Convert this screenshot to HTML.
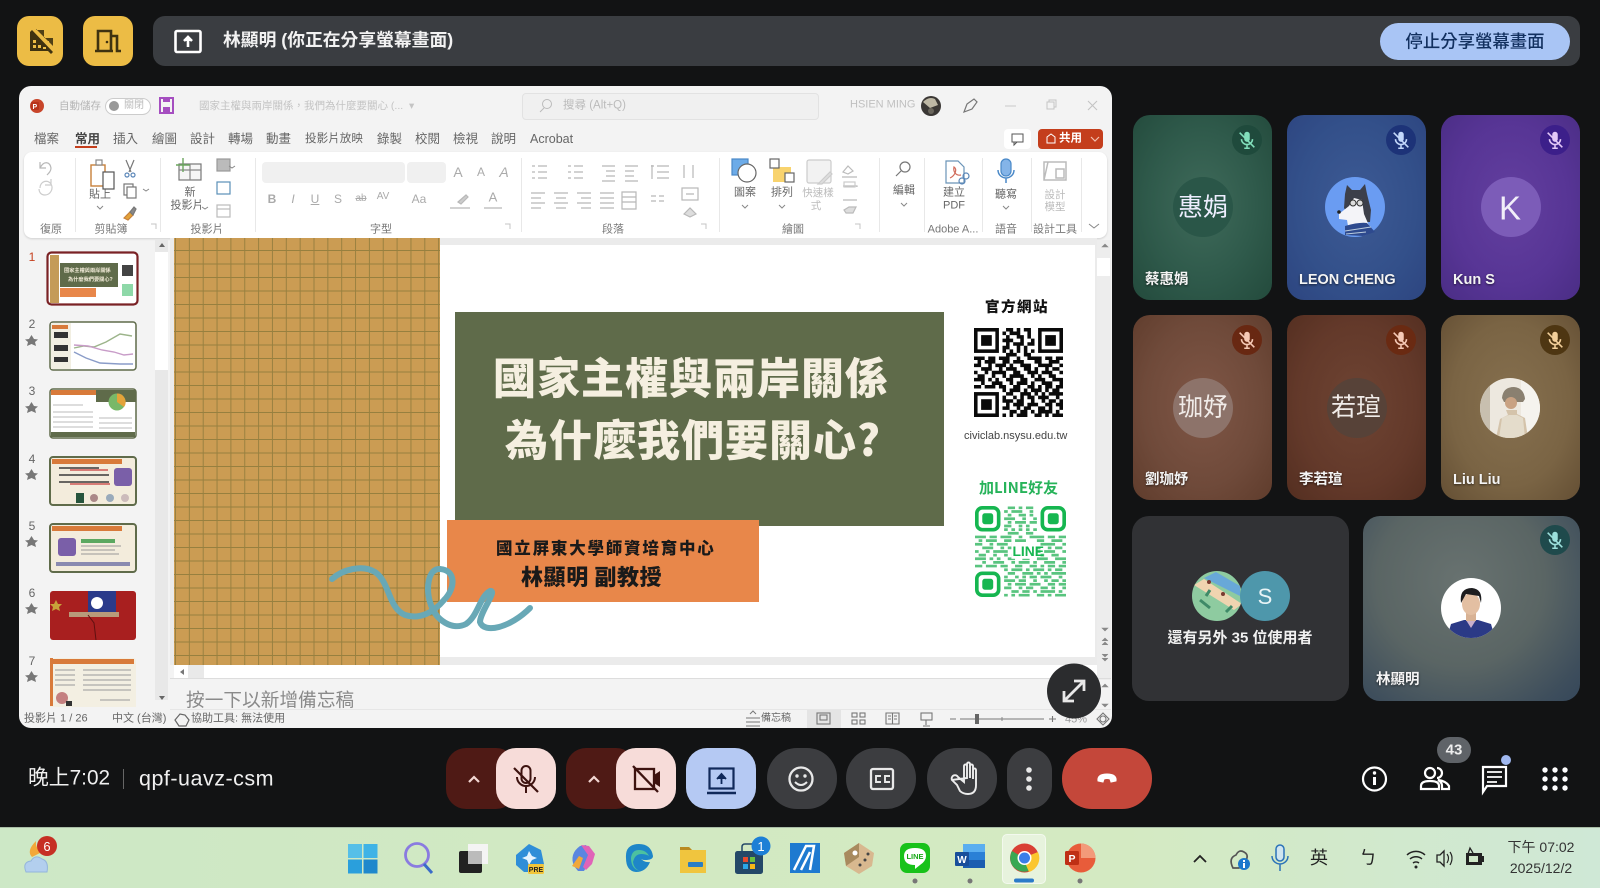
<!DOCTYPE html>
<html><head><meta charset="utf-8"><title>Meet</title>
<style>
html,body{margin:0;padding:0;background:#121314}
#r{position:relative;width:1600px;height:888px;overflow:hidden;background:#121314;font-family:"Liberation Sans","Noto Sans CJK TC",sans-serif;color:#fff;filter:blur(.3px)}
.b{position:absolute}
.t{position:absolute;white-space:nowrap;transform:translateY(-50%);line-height:1}
.c{position:absolute;white-space:nowrap;transform:translate(-50%,-50%);line-height:1}
svg{position:absolute;left:0;top:0;overflow:visible}
.tile{position:absolute;width:139px;height:185px;border-radius:17px}
.nm{font-size:14.5px;font-weight:700;color:#f4f4f4;text-shadow:0 1px 2px rgba(0,0,0,.6)}
.tab{font-size:12.5px;color:#666}
.rb{font-size:11px;color:#666}
.gl{font-size:11px;color:#777}
.dis{color:#bbb}
.st{font-size:11px;color:#666}
</style></head>
<body><div id="r">

<!-- top bar -->
<div class="b" style="left:17px;top:16px;width:46px;height:50px;background:#ecbc45;border-radius:12px"></div>
<div class="b" style="left:83px;top:16px;width:50px;height:50px;background:#ecbc45;border-radius:12px"></div>
<div class="b" style="left:153px;top:16px;width:1427px;height:50px;background:#3a3d41;border-radius:12px"></div>
<div class="t" style="left:223px;top:41px;font-size:17.8px;font-weight:700;color:#f2f2f2">林顯明 (你正在分享螢幕畫面)</div>
<div class="b" style="left:1380px;top:23px;width:190px;height:37px;background:#a9c5f5;border-radius:19px"></div>
<div class="c" style="left:1475px;top:42px;font-size:17.4px;color:#12305f;font-weight:500">停止分享螢幕畫面</div>

<!-- PPT window -->
<div class="b" style="left:19px;top:86px;width:1093px;height:642px;background:#f3f3f3;border-radius:12px;overflow:hidden"></div>
<div class="t" style="left:59px;top:106px;font-size:10.5px;color:#b5b5b5">自動儲存</div>
<div class="b" style="left:105px;top:98px;width:44px;height:15px;border:1px solid #ccc;border-radius:9px;background:#fff"></div>
<div class="b" style="left:109px;top:101px;width:10px;height:10px;border-radius:5px;background:#999"></div>
<div class="t" style="left:124px;top:106px;font-size:10px;color:#bbb">關閉</div>
<div class="t" style="left:199px;top:106px;font-size:10.5px;color:#c4c4c4">國家主權與兩岸關係，我們為什麼要關心 (...&nbsp;&nbsp;▾</div>
<div class="b" style="left:522px;top:93px;width:295px;height:25px;background:#f0f0f0;border:1px solid #e2e2e2;border-radius:4px"></div>
<div class="t" style="left:563px;top:106px;font-size:11.5px;color:#bbb">搜尋 (Alt+Q)</div>
<div class="t" style="left:850px;top:105px;font-size:11px;color:#c0c0c0">HSIEN MING</div>

<div class="t tab" style="left:34px;top:139px">檔案</div>
<div class="t tab" style="left:75px;top:139px;color:#444;font-weight:700">常用</div>
<div class="b" style="left:75px;top:146px;width:22px;height:2px;background:#c43e1c"></div>
<div class="t tab" style="left:113px;top:139px">插入</div>
<div class="t tab" style="left:152px;top:139px">繪圖</div>
<div class="t tab" style="left:190px;top:139px">設計</div>
<div class="t tab" style="left:228px;top:139px">轉場</div>
<div class="t tab" style="left:266px;top:139px">動畫</div>
<div class="t tab" style="left:305px;top:139px;font-size:11.6px">投影片放映</div>
<div class="t tab" style="left:377px;top:139px">錄製</div>
<div class="t tab" style="left:415px;top:139px">校閱</div>
<div class="t tab" style="left:453px;top:139px">檢視</div>
<div class="t tab" style="left:491px;top:139px">說明</div>
<div class="t tab" style="left:530px;top:139px">Acrobat</div>
<div class="b" style="left:1004px;top:129px;width:27px;height:20px;background:#fff;border-radius:4px"></div>
<div class="b" style="left:1038px;top:129px;width:65px;height:20px;background:#c43e1c;border-radius:4px"></div>
<div class="t" style="left:1059px;top:139px;font-size:11.5px;font-weight:700;color:#fff">共用</div>

<!-- ribbon -->
<div class="b" style="left:24px;top:152px;width:1083px;height:86px;background:#fff;border-radius:8px;box-shadow:0 1px 2px rgba(0,0,0,.15)"></div>
<div class="c gl" style="left:51px;top:229.500px">復原</div>
<div class="c gl" style="left:111px;top:229.500px">剪貼簿</div>
<div class="c gl" style="left:207px;top:229.500px">投影片</div>
<div class="c gl" style="left:381px;top:229.500px">字型</div>
<div class="c gl" style="left:613px;top:229.500px">段落</div>
<div class="c gl" style="left:793px;top:229.500px">繪圖</div>
<div class="c gl" style="left:953px;top:229.500px">Adobe A...</div>
<div class="c gl" style="left:1006px;top:229.500px">語音</div>
<div class="c gl" style="left:1055px;top:229.500px">設計工具</div>
<div class="c rb" style="left:100px;top:195px">貼上</div>
<div class="c rb" style="left:190px;top:193px">新</div>
<div class="c rb" style="left:187px;top:206px">投影片</div>
<div class="c rb" style="left:745px;top:193px">圖案</div>
<div class="c rb" style="left:782px;top:193px">排列</div>
<div class="c rb dis" style="left:818px;top:193px;font-size:10.5px">快速樣</div>
<div class="c rb dis" style="left:816px;top:206px;font-size:10.5px">式</div>
<div class="c rb" style="left:904px;top:191px">編輯</div>
<div class="c rb" style="left:954px;top:193px">建立</div>
<div class="c rb" style="left:954px;top:206px">PDF</div>
<div class="c rb" style="left:1006px;top:195px">聽寫</div>
<div class="c rb dis" style="left:1055px;top:195px;font-size:10.5px">設計</div>
<div class="c rb dis" style="left:1055px;top:207px;font-size:10.5px">模型</div>
<div class="b" style="left:262px;top:162px;width:143px;height:21px;background:#f0f0f0;border-radius:4px"></div>
<div class="b" style="left:407px;top:162px;width:39px;height:21px;background:#f0f0f0;border-radius:4px"></div>
<div class="c" style="left:458px;top:172px;font-size:14px;color:#aaa">A</div>
<div class="c" style="left:481px;top:172px;font-size:12px;color:#aaa">A</div>
<div class="c" style="left:504px;top:172px;font-size:14px;color:#aaa;font-style:italic">A</div>
<div class="c" style="left:272px;top:199px;font-size:12px;color:#aaa;font-weight:700">B</div>
<div class="c" style="left:293px;top:199px;font-size:12px;color:#aaa;font-style:italic">I</div>
<div class="c" style="left:315px;top:199px;font-size:12px;color:#aaa;text-decoration:underline">U</div>
<div class="c" style="left:338px;top:199px;font-size:12px;color:#aaa">S</div>
<div class="c" style="left:361px;top:199px;font-size:10px;color:#aaa;text-decoration:line-through">ab</div>
<div class="c" style="left:383px;top:197px;font-size:10px;color:#aaa">AV</div>
<div class="c" style="left:419px;top:199px;font-size:12px;color:#aaa">Aa</div>
<div class="c" style="left:493px;top:197px;font-size:13px;color:#aaa">A</div>

<!-- panels -->
<div class="b" style="left:155px;top:240px;width:13px;height:460px;background:#e8e8e8"></div>
<div class="b" style="left:155px;top:252px;width:13px;height:118px;background:#fff"></div>
<div class="b" style="left:170px;top:238px;width:927px;height:427px;background:#ebebeb"></div>
<div class="b" style="left:440px;top:245px;width:655px;height:412px;background:#fff"></div>
<div class="b" style="left:1097px;top:240px;width:14px;height:440px;background:#ededed"></div>
<div class="b" style="left:1097px;top:258px;width:13px;height:18px;background:#fff"></div>
<div class="b" style="left:174px;top:665px;width:923px;height:13px;background:#fff"></div>
<div class="b" style="left:188px;top:665px;width:16px;height:13px;background:#e9e9e9"></div>
<div class="b" style="left:170px;top:678px;width:941px;height:1px;background:#ddd"></div>
<div class="b" style="left:170px;top:709px;width:941px;height:1px;background:#e6e6e6"></div>
<div class="t" style="left:186px;top:701px;font-size:18.6px;color:#8a8a8a;letter-spacing:.1px;height:19px">按一下以新增備忘稿</div>
<div class="t st" style="left:24px;top:719px">投影片 1 / 26</div>
<div class="t st" style="left:112px;top:719px">中文 (台灣)</div>
<div class="t st" style="left:191px;top:719px">協助工具: 無法使用</div>
<div class="t st" style="left:761px;top:719px;font-size:10px">備忘稿</div>
<div class="b" style="left:807px;top:710px;width:34px;height:18px;background:#e4e4e4"></div>
<div class="c st" style="left:1076px;top:720px;color:#999">45%</div>
<div class="c" style="left:32px;top:257px;font-size:12px;color:#c43e1c">1</div>
<div class="c" style="left:32px;top:324px;font-size:12px;color:#666">2</div>
<div class="c" style="left:32px;top:391px;font-size:12px;color:#666">3</div>
<div class="c" style="left:32px;top:459px;font-size:12px;color:#666">4</div>
<div class="c" style="left:32px;top:526px;font-size:12px;color:#666">5</div>
<div class="c" style="left:32px;top:593px;font-size:12px;color:#666">6</div>
<div class="c" style="left:32px;top:661px;font-size:12px;color:#666">7</div>

<!-- tiles -->
<div class="tile" style="left:1133px;top:115px;background:radial-gradient(ellipse at 50% 48%,#3f6a5a 0,#2f5a4b 55%,#234a3c 100%)"></div>
<div class="tile" style="left:1287px;top:115px;background:radial-gradient(ellipse at 50% 48%,#3d5a94 0,#33508a 60%,#2d4580 100%)"></div>
<div class="tile" style="left:1441px;top:115px;background:radial-gradient(ellipse at 50% 48%,#633f9f 0,#573595 60%,#4a2d85 100%)"></div>
<div class="tile" style="left:1133px;top:315px;background:radial-gradient(ellipse at 50% 48%,#7f5646 0,#6f4a3a 60%,#5f3c2c 100%)"></div>
<div class="tile" style="left:1287px;top:315px;background:radial-gradient(ellipse at 50% 48%,#6e4433 0,#63392a 60%,#532e20 100%)"></div>
<div class="tile" style="left:1441px;top:315px;background:radial-gradient(ellipse at 50% 48%,#86704f 0,#7a6444 60%,#644f34 100%)"></div>
<div class="b" style="left:1132px;top:516px;width:217px;height:185px;border-radius:17px;background:#313235"></div>
<div class="b" style="left:1363px;top:516px;width:217px;height:185px;border-radius:17px;background:radial-gradient(ellipse at 45% 35%,#687270 0,#5a6564 50%,#3e4e5c 85%,#35475a 100%)"></div>

<div class="b" style="left:1173px;top:177px;width:60px;height:60px;border-radius:30px;background:#2a5648"></div>
<div class="b" style="left:1481px;top:177px;width:60px;height:60px;border-radius:30px;background:#7c5cb8"></div>
<div class="b" style="left:1173px;top:378px;width:60px;height:60px;border-radius:30px;background:#8d736a"></div>
<div class="b" style="left:1327px;top:378px;width:60px;height:60px;border-radius:30px;background:#574238"></div>
<div class="c" style="left:1203px;top:208px;font-size:25px;color:#eef">惠娟</div>
<div class="c" style="left:1510px;top:208px;font-size:33px;color:#f1eef9">K</div>
<div class="c" style="left:1203px;top:408px;font-size:25px;color:#f1ece9">珈妤</div>
<div class="c" style="left:1356px;top:408px;font-size:25px;color:#f1ece9">若瑄</div>
<div class="t nm" style="left:1145px;top:280px">蔡惠娟</div>
<div class="t nm" style="left:1299px;top:280px">LEON CHENG</div>
<div class="t nm" style="left:1453px;top:280px">Kun S</div>
<div class="t nm" style="left:1145px;top:480px">劉珈妤</div>
<div class="t nm" style="left:1299px;top:480px">李若瑄</div>
<div class="t nm" style="left:1453px;top:480px">Liu Liu</div>
<div class="t nm" style="left:1376px;top:680px">林顯明</div>
<div class="c" style="left:1240px;top:638px;font-size:15px;font-weight:700;color:#f0f0f0">還有另外 35 位使用者</div>

<!-- bottom bar -->
<div class="t" style="left:28px;top:779px;font-size:20.800px;color:#f0f0f0">晚上7:02</div>
<div class="b" style="left:123px;top:769px;width:1px;height:20px;background:#666"></div>
<div class="t" style="left:139px;top:779px;font-size:21.500px;letter-spacing:.5px;color:#f0f0f0">qpf-uavz-csm</div>
<div class="b" style="left:446px;top:748px;width:70px;height:61px;border-radius:20px;background:#4f1a15"></div>
<div class="b" style="left:496px;top:748px;width:60px;height:61px;border-radius:20px;background:#f7dcd9"></div>
<div class="b" style="left:566px;top:748px;width:70px;height:61px;border-radius:20px;background:#4f1a15"></div>
<div class="b" style="left:616px;top:748px;width:60px;height:61px;border-radius:20px;background:#f7dcd9"></div>
<div class="b" style="left:686px;top:748px;width:70px;height:61px;border-radius:21px;background:#b5c9f3"></div>
<div class="b" style="left:767px;top:748px;width:70px;height:61px;border-radius:30px;background:#3c3d40"></div>
<div class="b" style="left:846px;top:748px;width:70px;height:61px;border-radius:30px;background:#3c3d40"></div>
<div class="b" style="left:927px;top:748px;width:70px;height:61px;border-radius:30px;background:#3c3d40"></div>
<div class="b" style="left:1007px;top:748px;width:45px;height:61px;border-radius:23px;background:#3c3d40"></div>
<div class="b" style="left:1062px;top:748px;width:90px;height:61px;border-radius:30px;background:#c4473a"></div>
<div class="b" style="left:1437px;top:737px;width:34px;height:26px;border-radius:13px;background:#5f6368"></div>
<div class="c" style="left:1454px;top:750px;font-size:15px;font-weight:700;color:#eee">43</div>

<!-- taskbar -->
<div class="b" style="left:0;top:827px;width:1600px;height:61px;background:linear-gradient(90deg,#cde8c6 0,#d2e9c2 40%,#d4eac2 70%,#cfe8d6 100%);border-top:1px solid #a9bda6;box-sizing:border-box"></div>
<div class="b" style="left:1002px;top:834px;width:44px;height:50px;background:rgba(255,255,255,.45);border-radius:5px;border:1px solid rgba(255,255,255,.5);box-sizing:border-box"></div>
<div class="c" style="left:1319px;top:858px;font-size:18px;color:#222">英</div>
<div class="c" style="left:1368px;top:858px;font-size:18px;color:#222">ㄅ</div>
<div class="c" style="left:1541px;top:847px;font-size:14px;color:#333">下午 07:02</div>
<div class="c" style="left:1541px;top:868px;font-size:14px;color:#333">2025/12/2</div>

<svg width="1600" height="888" viewBox="0 0 1600 888">
<defs>
<symbol id="mo" viewBox="0 0 24 24"><rect x="9" y="3" width="6" height="11" rx="3" fill="currentColor"/><path d="M6 11a6 6 0 0 0 12 0M12 17v4M9 21h6M4 4l16 16" fill="none" stroke="currentColor" stroke-width="1.7"/></symbol>
<path id="qrd" fill="none" d="M9 .5h2M12 .5h1M14 .5h2M8 1.5h1M10 1.5h3M15 1.5h1M9 2.5h1M12 2.5h2M15 2.5h1M8 3.5h3M13 3.5h1M16 3.5h1M9 4.5h1M11 4.5h3M15 4.5h2M8 5.5h2M12 5.5h1M14 5.5h1M8 6.5h1M10 6.5h1M12 6.5h1M14 6.5h1M16 6.5h1M9 7.5h3M14 7.5h2M0 8.5h3M4 8.5h2M7 8.5h3M12 8.5h1M15 8.5h4M20 8.5h2M23 8.5h2M1 9.5h1M3 9.5h3M8 9.5h2M11 9.5h3M17 9.5h2M21 9.5h3M0 10.5h2M4 10.5h1M6 10.5h3M10 10.5h1M13 10.5h3M18 10.5h4M24 10.5h1M2 11.5h3M7 11.5h1M9 11.5h3M14 11.5h2M17 11.5h1M20 11.5h1M22 11.5h2M0 12.5h1M3 12.5h1M5 12.5h4M11 12.5h2M15 12.5h3M19 12.5h3M24 12.5h1M1 13.5h2M5 13.5h1M8 13.5h1M10 13.5h4M16 13.5h1M18 13.5h1M21 13.5h2M0 14.5h3M4 14.5h1M6 14.5h1M9 14.5h2M13 14.5h2M17 14.5h3M22 14.5h3M2 15.5h1M5 15.5h3M10 15.5h1M12 15.5h3M16 15.5h1M19 15.5h3M24 15.5h1M0 16.5h2M3 16.5h3M7 16.5h2M11 16.5h2M15 16.5h2M18 16.5h1M20 16.5h2M23 16.5h2M8 17.5h1M10 17.5h3M14 17.5h1M16 17.5h3M20 17.5h1M22 17.5h2M9 18.5h2M13 18.5h3M17 18.5h1M19 18.5h1M21 18.5h4M8 19.5h1M11 19.5h1M13 19.5h1M15 19.5h2M18 19.5h3M23 19.5h1M8 20.5h3M12 20.5h2M16 20.5h1M19 20.5h1M21 20.5h2M24 20.5h1M9 21.5h1M11 21.5h3M15 21.5h3M20 21.5h2M23 21.5h2M8 22.5h2M12 22.5h1M14 22.5h2M18 22.5h2M21 22.5h1M24 22.5h1M10 23.5h2M13 23.5h2M16 23.5h1M18 23.5h4M23 23.5h1M8 24.5h1M10 24.5h1M12 24.5h3M17 24.5h2M20 24.5h1M22 24.5h3"/>
<pattern id="grid" width="13.85" height="13.5" patternUnits="userSpaceOnUse" x="175" y="250"><path d="M.5 0V13.5M0 .5H13.85" stroke="#97803f" stroke-width=".95" fill="none"/></pattern>
</defs>

<!-- top icons -->
<g fill="#3f3210" stroke="none">
<path d="M30 32l2-2 21 22-2 2-3-3H30z"/><path d="M36 30h8v8h9v8l-4-4v-1h-1l-12-12z" opacity=".9"/>
</g>
<g fill="#ecbc45"><rect x="33" y="40" width="3" height="3"/><rect x="33" y="45" width="3" height="3"/><rect x="38" y="45" width="3" height="3"/><rect x="43" y="47" width="3" height="2"/></g>
<path d="M98 51V31h13v20M111 36h6v15h4M95 51h18" fill="none" stroke="#3f3210" stroke-width="2.600"/><circle cx="107" cy="42" r="1.300" fill="#3f3210"/>
<rect x="175.500" y="31" width="25" height="21" rx="1.500" fill="none" stroke="#fff" stroke-width="2.600"/>
<path d="M188 47v-8M184 41l4-4 4 4" stroke="#fff" stroke-width="2.600" fill="#fff"/>

<!-- title bar icons -->
<circle cx="37" cy="106" r="7" fill="#c8452a"/><rect x="31" y="102" width="8" height="8" rx="1" fill="#b8341c"/><text x="32.500" y="109" font-size="7" fill="#fff" font-family="Liberation Sans" font-weight="700">P</text>
<path d="M160 98h13v15h-13z" fill="none" stroke="#a54ec0" stroke-width="2"/><rect x="163" y="98" width="7" height="4" fill="#a54ec0"/><rect x="163" y="107" width="7" height="6" fill="#a54ec0"/>
<circle cx="547" cy="104" r="4.500" fill="none" stroke="#bbb"/><path d="M544 108l-4 4" stroke="#bbb"/>
<circle cx="931" cy="106" r="10" fill="#3a3734"/><path d="M923 102q6-6 12-3l3 6-8 3z" fill="#bdb7a4"/><circle cx="931" cy="111" r="3" fill="#6a665c"/>
<path d="M964 112l3-8 7-5 3 3-5 7z" fill="none" stroke="#777" stroke-width="1.200"/>
<path d="M1005 106h11" stroke="#c8c8c8"/><rect x="1047" y="102" width="7" height="7" fill="none" stroke="#c4c4c4"/><path d="M1049 102v-2h7v7h-2" fill="none" stroke="#c4c4c4"/><path d="M1088 101l9 9M1097 101l-9 9" stroke="#c4c4c4" stroke-width="1.100"/>
<rect x="1012" y="134" width="11" height="8" fill="none" stroke="#555"/><path d="M1014 142v3l3-3" fill="none" stroke="#555"/>
<path d="M1047 137l4-3 4 3v6h-8z" fill="none" stroke="#fff"/><path d="M1091 137l4 4 4-4" fill="none" stroke="#f2c0b0" stroke-width="1.200"/>

<!-- ribbon dividers -->
<g stroke="#e8e8e8"><path d="M75.500 158V232M160.500 158V232M255.500 158V232M521.500 158V232M719.500 158V232M879.500 158V232M924.500 158V232M982.500 158V232M1031.500 158V232M1081.500 158V232"/></g>
<!-- ribbon icons -->
<g fill="none" stroke="#b8b8b8" stroke-width="1.200">
<path d="M40 168c4-8 10-6 11 0 0 3-2 5-4 7M40 162v6h6"/><path d="M40 188c0-7 8-9 11-4s-1 11-6 11-6-4-6-6M51 179v6h-6" stroke="#ccc"/>
<path d="M458 202l8-7 2 2-7 7z" fill="#ccc"/><path d="M450 208h20M484 208h18"/>
<path d="M532 166h3M538 166h9M532 172h3M538 172h9M532 178h3M538 178h9M568 166h3M574 166h9M568 172h3M574 172h9M568 178h3M574 178h9M602 166h13M606 171h9M606 176h9M602 181h13M625 166h13M625 171h9M625 176h9M625 181h13M651 166h3M657 166h12M657 172h12M657 178h12M652 165v14M684 165v13M693 165v13"/>
<path d="M531 193h14M531 198h10M531 203h14M531 208h10M554 193h14M556 198h10M554 203h14M556 208h10M577 193h14M581 198h10M577 203h14M581 208h10M600 193h14M600 198h14M600 203h14M600 208h14M622 192h14v17h-14zM622 197h14M622 202h14M651 196h5M651 201h5M659 196h5M659 201h5"/>
<rect x="682" y="188" width="16" height="12"/><path d="M686 194h8M684 214l6-6 6 6-6 3z" fill="#ddd"/>
</g>
<g fill="none" stroke="#777" stroke-width="1.200">
<rect x="91" y="165" width="14" height="21" stroke="#c8813a" stroke-width="1.400"/><rect x="103" y="172" width="11" height="17" fill="#fff" stroke="#555"/><rect x="96" y="160" width="6" height="5" fill="#fff" stroke="#888"/>
<path d="M126 160l5 12M134 160l-5 12"/><circle cx="127" cy="175" r="2" stroke="#5a86b8"/><circle cx="133" cy="175" r="2" stroke="#5a86b8"/>
<rect x="124" y="184" width="9" height="11"/><rect x="127" y="187" width="9" height="11" fill="#fff"/>
<path d="M124 218l6-6 3 3-5 5z" fill="#e3a33a" stroke="#c8813a"/><path d="M130 212l4-5 2 2-3 6z" fill="#888"/>
<rect x="179" y="164" width="22" height="16" fill="#f6f6f6"/><path d="M190 164v16M179 170h22" stroke="#888"/><path d="M183 158v14M176 165h14" stroke="#6ca65f" stroke-width="1.400"/>
<rect x="217" y="159" width="13" height="12" fill="#bbb" stroke="#999"/><rect x="217" y="182" width="13" height="12" stroke="#5a90b8"/><rect x="217" y="205" width="13" height="12" stroke="#bbb"/><path d="M217 209h13" stroke="#bbb"/>
<rect x="732" y="159" width="16" height="16" fill="#6cabe8" stroke="#4a89c8"/><circle cx="747" cy="173" r="9" fill="#fff" stroke="#666"/>
<rect x="773" y="167" width="18" height="15" fill="#f8d36e" stroke="none"/><rect x="770" y="159" width="9" height="9" fill="#fff" stroke="#666"/><rect x="785" y="173" width="9" height="9" fill="#fff" stroke="#666"/>
<rect x="807" y="160" width="24" height="23" rx="2" fill="#f2f2f2" stroke="#ccc"/><path d="M818 184l12-12 2 2-10 10z" fill="#ddd" stroke="#ccc"/>
<path d="M843 172l5-6 5 5-5 3zM842 177h15M843 186h14v1M843 200h14" stroke="#bbb"/><rect x="844" y="182" width="11" height="5" stroke="#ccc"/><path d="M844 210l5-3h7l-3 6h-7z" stroke="#bbb" fill="#ddd"/>
<circle cx="905" cy="167" r="5"/><path d="M901 171l-5 5"/>
<path d="M946 161h12l6 6v16h-18z" stroke="#6a94b8"/><path d="M950 178c6-3 7-9 4-11-1 5 2 9 7 8" stroke="#d06a5a"/><circle cx="962" cy="181" r="3" stroke="#5a86b8"/><circle cx="966" cy="176" r="3" stroke="#5a86b8"/>
<rect x="1001" y="159" width="10" height="17" rx="5" fill="#84b4e8" stroke="#4a89c8"/><path d="M998 170a8 8 0 0 0 16 0M1006 178v5" stroke="#4a89c8" stroke-width="1.500"/>
<path d="M1044 162h22v18h-22zM1048 162l-4 18M1056 169h8v9h-8z" stroke="#bbb" stroke-width="1.500"/>
</g>
<g fill="none" stroke="#888" stroke-width="1"><path d="M97 206l3 3 3-3M143 189l3 2 3-2M202 207l3 2 3-2M229 166l3 2 3-2M742 205l3 3 3-3M779 205l3 3 3-3M901 203l3 3 3-3M1003 206l3 3 3-3M1089 224l5 4 5-4"/></g>
<g fill="none" stroke="#c4c4c4"><path d="M151 224h5v5M505 224h5v5M701 224h5v5M855 224h5v5"/></g>

<!-- thumbnails -->
<rect x="47.500" y="252.500" width="90" height="52" rx="4" fill="#fff" stroke="#7a2225" stroke-width="2.200"/>
<rect x="50" y="255" width="9" height="48" fill="#c49b58"/>
<rect x="60" y="263" width="58" height="24" fill="#5f6b4a"/>
<rect x="60" y="288" width="36" height="9" fill="#e8874a"/>
<text x="64" y="272" font-size="5.200" fill="#f3ecd9" font-weight="700">國家主權與兩岸關係</text><text x="68" y="281" font-size="5.200" fill="#f3ecd9" font-weight="700">為什麼我們要關心?</text>
<rect x="122" y="265" width="11" height="11" fill="#444"/><rect x="122" y="284" width="11" height="12" fill="#8ed8a8"/>

<g>
<rect x="50" y="322" width="86" height="48" rx="3" fill="#fff" stroke="#5f6b4a" stroke-width="1.500"/>
<rect x="51" y="323" width="20" height="46" fill="#f2efe2"/><rect x="52" y="325" width="16" height="4" fill="#d87a3a"/>
<rect x="54" y="332" width="14" height="6" fill="#333"/><rect x="54" y="345" width="14" height="6" fill="#333"/><rect x="54" y="357" width="14" height="5" fill="#333"/>
<path d="M74 348l10-2 10 1 12-5 14-8 12 2" stroke="#9cb48a" stroke-width="1.400" fill="none"/><path d="M74 345l14 1 14 4 12 2 10 3 9-1" stroke="#c89cc8" stroke-width="1.400" fill="none"/><path d="M74 352l12 6 14 5 20 1 13 0" stroke="#8a9cc8" stroke-width="1.400" fill="none"/>
<rect x="50" y="389" width="86" height="49" rx="3" fill="#fff" stroke="#5f6b4a" stroke-width="1.500"/><rect x="51" y="390" width="45" height="5" fill="#d87a3a"/>
<rect x="96" y="390" width="40" height="12" fill="#5f6b4a"/><circle cx="117" cy="402" r="8.500" fill="#78b868"/><path d="M117 402V393.500A8.500 8.500 0 0 1 124 407z" fill="#e3a33a"/>
<path d="M53 405h30M53 412h40M53 417h40M53 422h40M53 427h40M99 418h33M99 423h33M99 428h33" stroke="#bbb"/><rect x="51" y="432" width="84" height="5" fill="#5f6b4a"/>
<rect x="50" y="457" width="86" height="48" rx="3" fill="#f3ecdc" stroke="#5f6b4a" stroke-width="2"/><rect x="52" y="459" width="70" height="5" fill="#d87a3a"/>
<path d="M59 468h40M59 475h50M59 482h50" stroke="#3a3a3a" stroke-width="1.500"/><path d="M70 470h38M70 484h40" stroke="#c63a3a" stroke-width="1.200"/>
<rect x="114" y="468" width="18" height="18" rx="3" fill="#7a5fa8"/><rect x="76" y="493" width="8" height="10" fill="#26543c"/><circle cx="94" cy="498" r="4" fill="#a88"/><circle cx="110" cy="498" r="4" fill="#9ab"/><circle cx="125" cy="498" r="4" fill="#cbb"/>
<rect x="50" y="524" width="86" height="48" rx="3" fill="#f3ecdc" stroke="#5f6b4a" stroke-width="2"/><rect x="52" y="526" width="70" height="5" fill="#d87a3a"/>
<rect x="58" y="538" width="18" height="18" rx="3" fill="#7a5fa8"/><rect x="81" y="539" width="34" height="4" fill="#5ba860"/><path d="M81 546h40M81 550h34M81 554h38" stroke="#999"/><rect x="56" y="562" width="74" height="4" fill="#8a8ab0"/>
<rect x="50" y="591" width="86" height="49" rx="3" fill="#a81f1f"/><rect x="88" y="591" width="28" height="24" fill="#2a3a8a"/><circle cx="97" cy="603" r="6" fill="#fff"/><path d="M56 600l2 4 4 0-3 3 1 4-4-2-4 2 1-4-3-3 4 0z" fill="#c8a23a"/><rect x="69" y="612" width="50" height="5" fill="#b89a7a"/><path d="M88 615l6 8 2 17" stroke="#601010" fill="none"/>
<path d="M50 661q0-3 3-3h80q3 0 3 3v46H50z" fill="#f3efe2"/><rect x="52" y="659" width="82" height="5" fill="#d87a3a"/><rect x="50" y="658" width="3" height="48" fill="#d87a3a"/>
<path d="M55 670h20M55 675h20M55 680h20M55 685h20M83 670h48M83 675h48M83 680h48M83 685h48M83 690h48M100 700h30" stroke="#999"/><circle cx="62" cy="698" r="6" fill="#c48080"/><rect x="66" y="701" width="6" height="5" fill="#333"/>
</g>
<g fill="#777" font-size="10"><path d="M29 339l2.500-4 2.500 4 4 .5-3 2.500 1 4-4.500-2-4.500 2 1-4-3-2.500zM29 406l2.500-4 2.500 4 4 .5-3 2.500 1 4-4.500-2-4.500 2 1-4-3-2.500zM29 473l2.500-4 2.500 4 4 .5-3 2.500 1 4-4.500-2-4.500 2 1-4-3-2.500zM29 540l2.500-4 2.500 4 4 .5-3 2.500 1 4-4.500-2-4.500 2 1-4-3-2.500zM29 607l2.500-4 2.500 4 4 .5-3 2.500 1 4-4.500-2-4.500 2 1-4-3-2.500zM29 675l2.500-4 2.500 4 4 .5-3 2.500 1 4-4.500-2-4.500 2 1-4-3-2.500z"/></g>
<path d="M159 247l3-4 3 4zM159 696l3 4 3-4z" fill="#666"/><path d="M184 669v6l-4-3z" fill="#777"/><path d="M1102 247l3-3 3 3zM1102 628l3 3 3-3zM1102 641l3-3 3 3M1102 645l3-3 3 3M1102 654l3 3 3-3M1102 658l3 3 3-3M1102 687l3-3 3 3zM1102 704l3 3 3-3z" fill="#888" stroke="#888" stroke-width=".6"/>

<!-- slide -->
<rect x="174" y="238" width="266" height="427" fill="#cb9c53"/>
<rect x="174" y="238" width="266" height="427" fill="url(#grid)"/>
<path d="M455 312H944V526H455z" fill="#5f6b4a"/>
<path d="M447 520H759V602H447z" fill="#e8874a"/>
<text x="493" y="394" font-size="43" font-weight="900" fill="#f5efe0" letter-spacing="1" font-family="Noto Sans CJK TC,sans-serif">國家主權與兩岸關係</text>
<text x="505" y="456" font-size="43" font-weight="900" fill="#f5efe0" letter-spacing="1" font-family="Noto Sans CJK TC,sans-serif">為什麼我們要關心?</text>
<text x="496" y="554" font-size="16.500" font-weight="900" fill="#1a1a1a" letter-spacing="1.800" font-family="Noto Sans CJK TC,sans-serif">國立屏東大學師資培育中心</text>
<text x="521" y="585" font-size="22" font-weight="900" fill="#1a1a1a" letter-spacing=".6" font-family="Noto Sans CJK TC,sans-serif">林顯明 副教授</text>
<path d="M332 579C342 570 362 564 375 572C390 582 388 608 405 615C420 620 434 612 444 600C456 588 456 570 440 569C428 568 425 590 431 605C436 620 452 631 466 624C478 616 480 596 490 591C498 590 480 612 480 622C484 634 510 628 530 608" fill="none" stroke="#68a8b6" stroke-width="6" stroke-linecap="round"/>
<text x="985" y="312" font-size="14.500" font-weight="900" fill="#111" letter-spacing="1.500" font-family="Noto Sans CJK TC,sans-serif">官方網站</text>
<text x="964" y="439" font-size="11" fill="#444" font-family="Liberation Sans">civiclab.nsysu.edu.tw</text>
<text x="979" y="493" font-size="15" font-weight="700" fill="#27b35a" font-family="Noto Sans CJK TC,sans-serif">加LINE好友</text>
<g transform="translate(974 328) scale(3.56)"><use href="#qrd" stroke="#0a0a0a" stroke-width="1"/>
<g fill="none" stroke="#0a0a0a"><rect x=".5" y=".5" width="6" height="6"/><rect x="18.500" y=".5" width="6" height="6"/><rect x=".5" y="18.500" width="6" height="6"/></g>
<g fill="#0a0a0a"><rect x="2" y="2" width="3" height="3"/><rect x="20" y="2" width="3" height="3"/><rect x="2" y="20" width="3" height="3"/></g></g>
<g transform="translate(975 506) scale(3.64)"><use href="#qrd" stroke="#3cba68" stroke-width=".75" opacity=".85"/>
<rect x="10" y="10" width="7" height="4.500" fill="#fff"/>
<g fill="none" stroke="#16b650"><rect x=".5" y=".5" width="6" height="6" rx="1.500"/><rect x="18.500" y=".5" width="6" height="6" rx="1.500"/><rect x=".5" y="18.500" width="6" height="6" rx="1.500"/></g>
<g fill="#16b650"><rect x="2" y="2" width="3" height="3" rx=".7"/><rect x="20" y="2" width="3" height="3" rx=".7"/><rect x="2" y="20" width="3" height="3" rx=".7"/></g>
<text x="10.300" y="13.800" font-size="3.800" font-weight="700" fill="#16b650" font-family="Liberation Sans">LINE</text></g>

<!-- expand button -->
<ellipse cx="1074" cy="691" rx="27" ry="27.500" fill="#2b2c2e"/>
<path d="M1064 701l20-20M1074 681h10v10M1064 691v10h10" fill="none" stroke="#e8e8e8" stroke-width="2.800"/>

<!-- status icons -->
<path d="M175 720l5-6 5 1 4 5-3 6h-7z" fill="none" stroke="#666" stroke-width="1.200"/>
<path d="M746 718h14M746 722h14M746 726h14M750 714l3-3 3 3" fill="none" stroke="#777"/>
<g fill="none" stroke="#777" stroke-width="1.100"><rect x="817" y="713" width="13" height="11"/><rect x="820" y="715" width="7" height="5"/>
<rect x="852" y="713" width="5" height="4"/><rect x="860" y="713" width="5" height="4"/><rect x="852" y="720" width="5" height="4"/><rect x="860" y="720" width="5" height="4"/>
<path d="M886 713h13v11h-13zM892.500 713v11M888 716h3M888 719h3M894 716h3M894 719h3"/><rect x="921" y="713" width="11" height="7"/><path d="M926 720v5M923 726h7"/>
<path d="M950 719h6M960 719h84M1049 719h7M1052.500 716v6M1097 719l6-6 6 6-6 6z"/><circle cx="1103" cy="719" r="3"/></g>
<rect x="975" y="714" width="4" height="10" fill="#666"/><path d="M1002 717v4" stroke="#888"/>

<!-- tile badges -->
<circle cx="1247" cy="140" r="15" fill="#1f4a3c"/><use href="#mo" x="1236" y="129" width="22" height="22" color="#82e0bc"/>
<circle cx="1401" cy="140" r="15" fill="#1d3378"/><use href="#mo" x="1390" y="129" width="22" height="22" color="#c3d8fb"/>
<circle cx="1555" cy="140" r="15" fill="#3c1f8a"/><use href="#mo" x="1544" y="129" width="22" height="22" color="#e3c8f8"/>
<circle cx="1247" cy="340" r="15" fill="#682812"/><use href="#mo" x="1236" y="329" width="22" height="22" color="#f6c9b6"/>
<circle cx="1401" cy="340" r="15" fill="#6a2a12"/><use href="#mo" x="1390" y="329" width="22" height="22" color="#f6c9b6"/>
<circle cx="1555" cy="340" r="15" fill="#4e3612"/><use href="#mo" x="1544" y="329" width="22" height="22" color="#f4d09a"/>
<circle cx="1555" cy="540" r="15" fill="#1f4a4c"/><use href="#mo" x="1544" y="529" width="22" height="22" color="#9ce0dc"/>

<!-- husky avatar -->
<circle cx="1355" cy="207" r="30" fill="#6a9cf2"/>
<path d="M1345 194l2-9 5 5h8l5-6 2 10 4 16-1 12h-16l-10-14z" fill="#3c3f4a"/>
<path d="M1339 214l10-8 5-8 8 2 2 14 6 14-1 4h-20l-2-12-8-1z" fill="#f4f4f8"/>
<ellipse cx="1353" cy="203" rx="3" ry="3" fill="#ddd" stroke="#333"/><ellipse cx="1360" cy="203" rx="3" ry="3" fill="#ddd" stroke="#333"/><circle cx="1339" cy="212" r="1.800" fill="#222"/>
<path d="M1345 226q14-4 22-3l8 9-12 4-18-1z" fill="#2e4a8e"/><path d="M1345 231l26-4M1346 234l20-2" stroke="#bcd" stroke-width="1"/>

<!-- woman avatar -->
<clipPath id="wc"><circle cx="1510" cy="408" r="30"/></clipPath>
<g clip-path="url(#wc)"><rect x="1480" y="378" width="60" height="60" fill="#ede8df"/><rect x="1480" y="378" width="10" height="60" fill="#c8bfaf"/>
<rect x="1521" y="378" width="19" height="60" fill="#f5f3ee"/>
<path d="M1502 398q1-11 12-11 10 1 11 12l-2 3h-19z" fill="#8a8070"/><ellipse cx="1511" cy="403" rx="6" ry="6" fill="#c9a283"/><path d="M1506 410l2 5-8 4-4 19h32l-3-20-8-4 0-4z" fill="#d4c3aa"/><path d="M1502 418l-3 20h26l-2-20-6-3h-8z" fill="#e4dccb"/></g>

<!-- man avatar -->
<clipPath id="mc"><circle cx="1471" cy="608" r="30"/></clipPath>
<g clip-path="url(#mc)"><rect x="1441" y="578" width="60" height="60" fill="#fff"/><path d="M1447 638l4-14 13-4h14l13 4 4 14z" fill="#2b3a86"/><path d="M1466 620l5 8 5-8z" fill="#c9b0cc"/><rect x="1466" y="612" width="10" height="9" fill="#d8b294"/><ellipse cx="1471" cy="604" rx="9" ry="11" fill="#e3bfa2"/><path d="M1461 603q-2-15 11-15 11 1 9 15l-2-7-13-2z" fill="#1d1d1f"/></g>

<!-- map + S -->
<clipPath id="pc"><circle cx="1217" cy="596" r="25"/></clipPath>
<g clip-path="url(#pc)"><rect x="1192" y="571" width="50" height="50" fill="#8ecba0"/><path d="M1194 585l40 25 8-6-38-25z" fill="#f0d4b0"/><path d="M1204 578l36 18v-10l-24-14z" fill="#68a8d8"/><path d="M1200 600l10 8M1210 590l-4 6M1226 612l6-6" stroke="#3f8a68" stroke-width="3"/><circle cx="1209" cy="582" r="2" fill="#7a3a30"/><circle cx="1223" cy="594" r="2" fill="#7a3a30"/></g>
<circle cx="1265" cy="596" r="25" fill="#4e97ab"/>
<text x="1265" y="604" text-anchor="middle" font-size="22" fill="#e8f4f6" font-family="Liberation Sans">S</text>

<!-- control icons -->
<path d="M469 782l5-5 5 5M589 782l5-5 5 5" fill="none" stroke="#f2d6d2" stroke-width="2.200"/>
<g fill="none" stroke="#3e1310" stroke-width="2"><rect x="521.500" y="766" width="9" height="17" rx="4.500"/><path d="M517 777a9 9 0 0 0 18 0M526 786v7"/><path d="M514 768l24 24" stroke-width="2.200"/></g>
<rect x="635" y="769" width="19" height="20" fill="none" stroke="#3e1310" stroke-width="2.300"/><path d="M654 775l6-4v16l-6-4z" fill="#3e1310"/><path d="M633 766l25 26" stroke="#3e1310" stroke-width="2.300"/>
<rect x="709.500" y="768.500" width="24" height="20" fill="none" stroke="#10295a" stroke-width="2.200"/><path d="M721.500 784v-9M717 779l4.500-5 4.500 5" fill="#10295a" stroke="#10295a" stroke-width="1.800"/><path d="M707 793h29" stroke="#10295a" stroke-width="2.400"/>
<circle cx="801" cy="779" r="11.500" fill="none" stroke="#e8e8e8" stroke-width="2.300"/><circle cx="797" cy="776" r="1.700" fill="#e8e8e8"/><circle cx="805" cy="776" r="1.700" fill="#e8e8e8"/><path d="M795 782q6 6 12 0" fill="none" stroke="#e8e8e8" stroke-width="2"/>
<rect x="871" y="769" width="22" height="20" rx="2" fill="none" stroke="#e8e8e8" stroke-width="2.300"/><path d="M881 776h-5v6h5M890 776h-5v6h5" fill="none" stroke="#e8e8e8" stroke-width="1.900"/>
<path d="M952 780l5 5 3 6q3 3 8 3 8 0 8-9v-15a1.500 1.500 0 0 0-3 0v9M973 779v-13a1.500 1.500 0 0 0-3 0v12M970 778v-14a1.500 1.500 0 0 0-3 0v14M967 778v-12a1.500 1.500 0 0 0-3 0v16l-6-5a2 2 0 0 0-6 3z" fill="none" stroke="#ededed" stroke-width="1.900"/>
<circle cx="1029" cy="770" r="2.800" fill="#e8e8e8"/><circle cx="1029" cy="779" r="2.800" fill="#e8e8e8"/><circle cx="1029" cy="788" r="2.800" fill="#e8e8e8"/>
<path d="M1098 781q-1-7 9-7t9 7l-5 1-1-3q-3-1-6 0l-1 3z" fill="#fff" stroke="#fff"/>

<circle cx="1374.500" cy="779" r="11.500" fill="none" stroke="#fff" stroke-width="2.200"/><rect x="1373" y="777" width="3" height="8" fill="#fff"/><circle cx="1374.500" cy="773" r="1.700" fill="#fff"/>
<circle cx="1430" cy="773" r="5" fill="none" stroke="#fff" stroke-width="2.200"/><path d="M1421 789v-3q0-5 9-5t9 5v3zM1437 768a5 5 0 0 1 0 10M1442 789v-3q0-4-4-6q8 1 11 6v3z" fill="none" stroke="#fff" stroke-width="2.200"/>
<path d="M1483 767h23v19h-19l-4 6z" fill="none" stroke="#fff" stroke-width="2.200"/><path d="M1487 772h15M1487 777h15M1487 782h10" stroke="#fff" stroke-width="1.800"/>
<circle cx="1506" cy="760" r="5" fill="#a0b8f0"/>
<g fill="#fff"><circle cx="1545" cy="770" r="2.700"/><circle cx="1555" cy="770" r="2.700"/><circle cx="1565" cy="770" r="2.700"/><circle cx="1545" cy="779" r="2.700"/><circle cx="1555" cy="779" r="2.700"/><circle cx="1565" cy="779" r="2.700"/><circle cx="1545" cy="788" r="2.700"/><circle cx="1555" cy="788" r="2.700"/><circle cx="1565" cy="788" r="2.700"/></g>

<!-- taskbar icons -->
<path d="M32 857q-6-6 4-16-1 7 6 11z" fill="#f2a83a"/>
<path d="M26 872q-4-10 5-11 4-7 11-2 7 2 5 13z" fill="#b3cfee" stroke="#93b5dc"/><circle cx="47" cy="846" r="10" fill="#c62f24"/><text x="47" y="851" text-anchor="middle" font-size="13" fill="#fff" font-family="Liberation Sans">6</text>
<g fill="#2a9fdc"><rect x="348" y="844" width="14" height="14" fill="#56bfe8"/><rect x="363.500" y="844" width="14" height="14" fill="#3fb3e6"/><rect x="348" y="859.500" width="14" height="14" fill="#2a9fdc"/><rect x="363.500" y="859.500" width="14" height="14" fill="#1f88cc"/></g>
<circle cx="417" cy="855" r="11.500" fill="none" stroke="#8a7be0" stroke-width="2.800"/><path d="M424 864l8 9" stroke="#3a6cc8" stroke-width="3"/>
<rect x="468" y="844" width="20" height="20" fill="#f4f4f4"/><rect x="459" y="851" width="23" height="22" rx="2" fill="#222"/><rect x="468" y="851" width="14" height="13" fill="#bbb"/>
<path d="M516 855l13-11 12 6 3 14-10 8h-10l-8-7z" fill="#2f8ed8"/><path d="M529 851l3 5 5 2-5 2-3 5-2-5-5-2 5-2z" fill="#e6f4ff"/><rect x="528" y="864" width="16" height="10" rx="1.500" fill="#f2c53a"/><text x="536" y="872" text-anchor="middle" font-size="7" fill="#222" font-weight="700" font-family="Liberation Sans">PRE</text>
<path d="M574 866q-5-12 6-20l6-1 6 12-8 14-6 0z" fill="#5a86e0"/><path d="M581 845l8 1 6 8-3 10-6 6-3-3 5-12z" fill="#e063b8"/><path d="M572 866l7-10 4 2-4 11z" fill="#f0a83a"/>
<path d="M626 858q-1-14 13-14 12 0 14 12 0 4-8 4-4 0-6-3 5 6 11 5-4 10-14 10-10-1-10-14z" fill="#1e86c8"/><path d="M631 858q1-8 8-8t10 6q-3-2-8-2-6 0-8 8 1 7 7 9-9-2-9-13z" fill="#4cc1a0"/>
<path d="M680 847h9l3 3h14v23h-26z" fill="#f0c53e"/><path d="M680 847h9l3 3h-12z" fill="#b98a20"/><rect x="688" y="862" width="15" height="5" rx="1" fill="#2a7ec4"/>
<rect x="735" y="851" width="28" height="23" rx="2.500" fill="#244868"/><path d="M742 851v-4q0-3 3-3h8q3 0 3 3v4" fill="none" stroke="#244868" stroke-width="1.500"/><rect x="743" y="857" width="5" height="5" fill="#e84a2e"/><rect x="750" y="857" width="5" height="5" fill="#6cc040"/><rect x="743" y="864" width="5" height="5" fill="#2ba6e8"/><rect x="750" y="864" width="5" height="5" fill="#f6b818"/>
<circle cx="761" cy="846" r="9.500" fill="#1c7fd6"/><text x="761" y="851" text-anchor="middle" font-size="13" fill="#fff" font-family="Liberation Sans">1</text>
<rect x="790" y="843" width="30" height="30" fill="#1e7ad0"/><path d="M794 870l12-24h8l-4 24M801 870l9-18" fill="none" stroke="#fff" stroke-width="2.500"/>
<path d="M859 843l15 10-2 13-13 8-13-8-2-13z" fill="#d8b88f"/><path d="M859 843l0 14-13 9-2-13z" fill="#a88a5e"/><circle cx="865" cy="860" r="1.500" fill="#444"/><circle cx="860" cy="865" r="1.500" fill="#444"/><circle cx="868" cy="854" r="1.500" fill="#444"/><circle cx="855" cy="853" r="2.500" fill="#fff"/>
<rect x="900" y="843" width="30" height="30" rx="7" fill="#18c21a"/><path d="M915 848q11 0 11 8 0 5-6 9l-5 4v-4q-11 0-11-9 0-8 11-8z" fill="#fff"/><text x="915" y="859" text-anchor="middle" font-size="7.500" font-weight="700" fill="#18a818" font-family="Liberation Sans">LINE</text>
<rect x="963" y="844" width="22" height="8" fill="#5aaef0"/><rect x="963" y="852" width="22" height="8" fill="#2a80d6"/><rect x="963" y="860" width="22" height="8" fill="#1a5db0"/><rect x="955" y="852" width="14" height="14" rx="1" fill="#184e9a"/><text x="962" y="863" text-anchor="middle" font-size="10" fill="#fff" font-weight="700" font-family="Liberation Sans">W</text>
<circle cx="1024.500" cy="858" r="14.500" fill="#d93f35"/><path d="M1012 865a14.500 14.500 0 0 1 0-14l12 7 7 12a14.500 14.500 0 0 1-19-5z" fill="#38a853"/><path d="M1038 852a14.500 14.500 0 0 1-9 20l-6-14z" fill="#fbc62e"/><circle cx="1024.500" cy="858" r="7" fill="#fff"/><circle cx="1024.500" cy="858" r="5.500" fill="#3a7ee8"/>
<circle cx="1081" cy="858" r="14.500" fill="#e85c3a"/><path d="M1081 843.500v14.500h14.500a14.500 14.500 0 0 0-14.500-14.500z" fill="#f39a7a"/><rect x="1065" y="851" width="14" height="14" rx="1.500" fill="#bf2f15"/><text x="1072" y="862" text-anchor="middle" font-size="10.500" fill="#fff" font-weight="700" font-family="Liberation Sans">P</text>
<circle cx="915" cy="881" r="2.500" fill="#777"/><circle cx="970" cy="881" r="2.500" fill="#777"/><circle cx="1080" cy="881" r="2.500" fill="#777"/><rect x="1014" y="878.500" width="20" height="4" rx="2" fill="#2b7bc9"/>
<path d="M1194 862l6-6 6 6" fill="none" stroke="#222" stroke-width="1.800"/>
<path d="M1233 868q-5-10 3-13 3-6 8-3 4 2 3 6l-8 10z" fill="none" stroke="#555" stroke-width="1.700"/><circle cx="1244" cy="864" r="6" fill="#1b78cc"/><rect x="1243" y="863" width="2" height="5" fill="#fff"/><rect x="1243" y="860" width="2" height="2" fill="#fff"/>
<rect x="1276" y="845" width="8" height="16" rx="4" fill="#cfe5f0" stroke="#2a72b8" stroke-width="1.500"/><path d="M1272 856a8 8 0 0 0 16 0M1280 864v7" fill="none" stroke="#2a72b8" stroke-width="1.500"/>
<path d="M1407 855a13 13 0 0 1 18 0M1410 859a9 9 0 0 1 12 0M1413 863a5 5 0 0 1 6 0" fill="none" stroke="#222" stroke-width="1.500"/><circle cx="1416" cy="867" r="1.500" fill="#222"/>
<path d="M1437 855h3l4-4v15l-4-4h-3z" fill="none" stroke="#222" stroke-width="1.300"/><path d="M1447 854q3 4 0 9M1450 852q4 6 0 13" fill="none" stroke="#222" stroke-width="1.200"/>
<rect x="1466" y="853" width="16" height="12" fill="#222"/><rect x="1482" y="856" width="2" height="6" fill="#222"/><path d="M1467 857l3-9 3 5" fill="none" stroke="#222" stroke-width="1.300"/><rect x="1469" y="856" width="9" height="6" fill="#cfe8c8"/>
</svg>
</div></body></html>
